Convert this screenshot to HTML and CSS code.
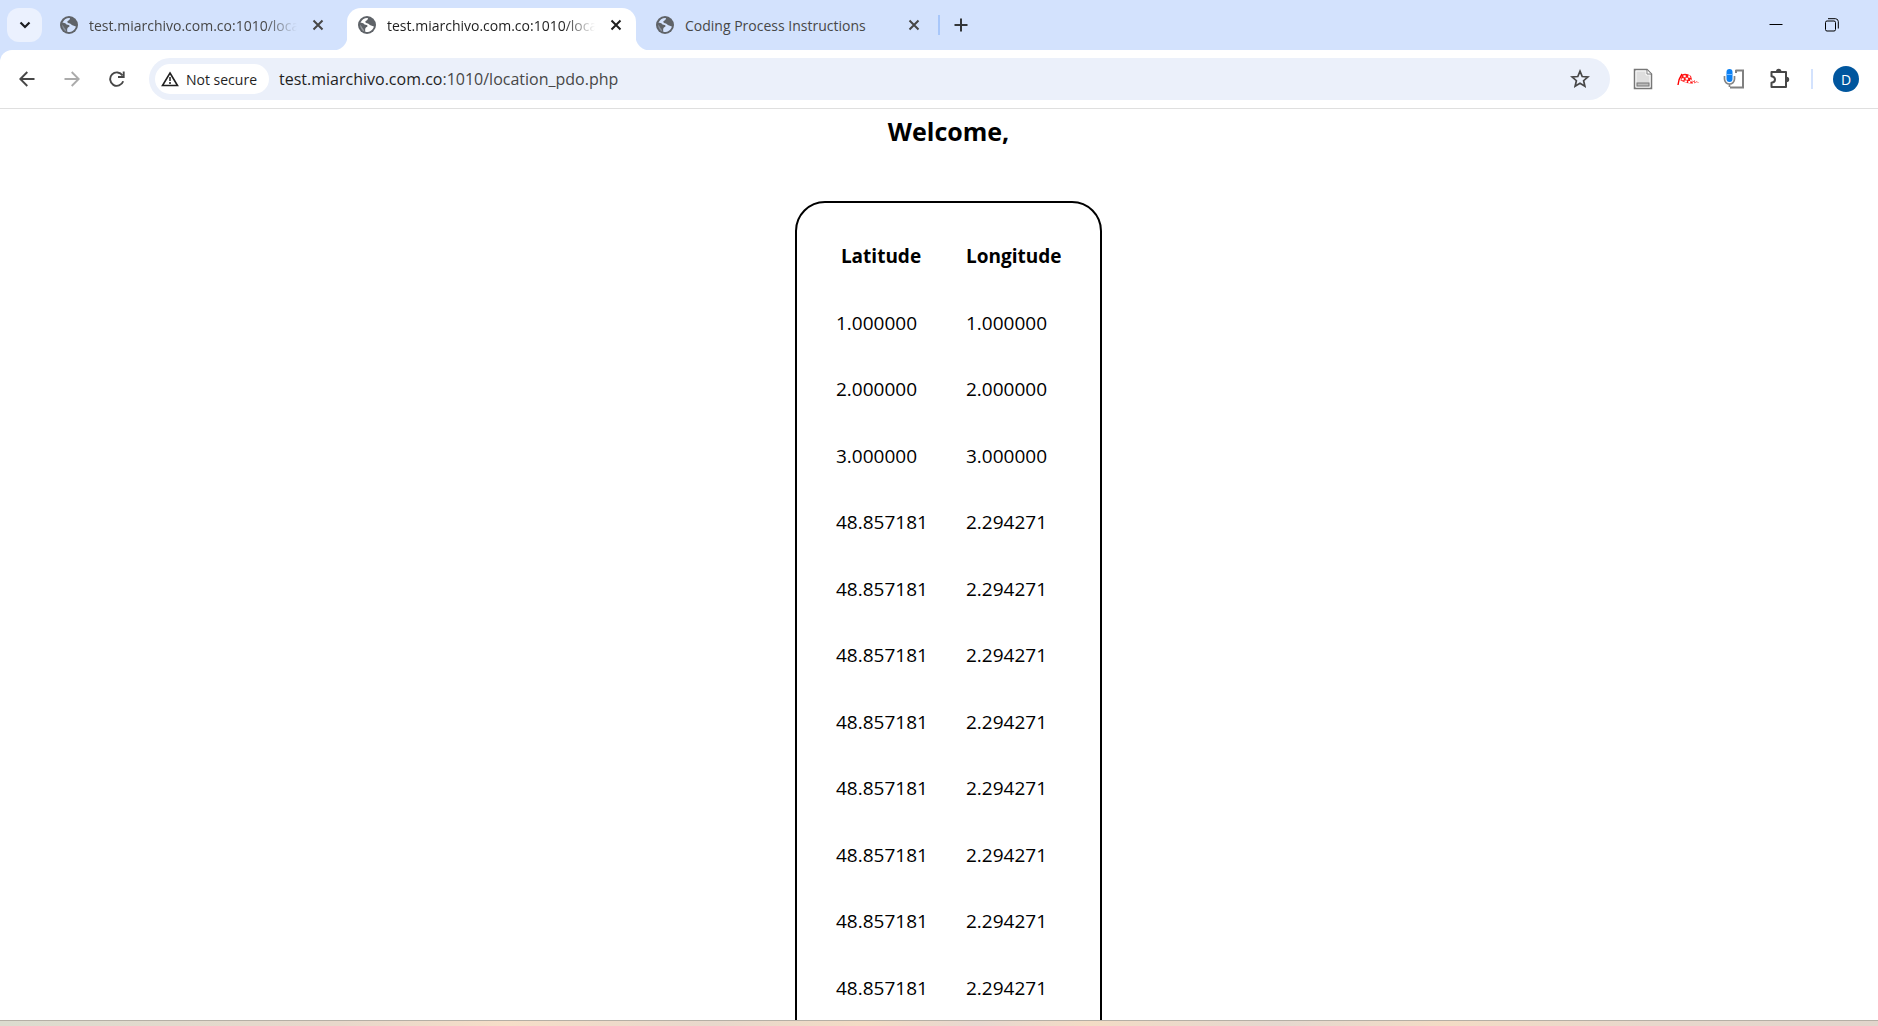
FILE: index.html
```html
<!DOCTYPE html>
<html lang="en">
<head>
<meta charset="utf-8">
<title>Location</title>
<link rel="stylesheet" href="styles.css">
</head>
<body>
<svg class="defs" aria-hidden="true">
  <symbol id="globe" viewBox="0 0 18 18">
    <circle cx="9" cy="9" r="9" fill="#5f6368"/>
    <path d="M10 2 C7 1.600 3.500 3.500 2.400 7 C4.500 6.500 5.500 7.500 6.500 8.500 C8 9 9.500 8.500 9.500 10 C9.500 11.200 8 11 7.500 12 C7 13.500 7 14.500 7.500 16 C11.500 16.500 15 14 15.900 10.500 C14 9.500 12 9.500 11 8.200 C10 7 7.500 7.500 7.300 6 C7.100 4.500 9 4.500 9.500 3.700 Z" fill="currentColor"/>
    <path d="M2.100 8.500 C2 12 4 14.800 6.500 15.800 C6 13 4.500 12 3.600 10.400 Z" fill="currentColor" opacity=".35"/>
  </symbol>
  <symbol id="close" viewBox="0 0 12 12">
    <path d="M1.500 1.500 L10.500 10.500 M10.500 1.500 L1.500 10.500" fill="none" stroke="currentColor" stroke-width="2"/>
  </symbol>
</svg>
<header class="browser">
  <div class="tabstrip">
    <button class="tab-search" aria-label="Search tabs">
      <svg width="12" height="8" viewBox="0 0 12 8"><path d="M1.500 1.500 L6 6 L10.500 1.500" fill="none" stroke="#1b1c20" stroke-width="2.200"/></svg>
    </button>
    <div class="tab">
      <svg class="favicon"><use href="#globe"/></svg>
      <span class="tab-title faded">test.miarchivo.com.co:1010/location</span>
      <button class="icon-button" aria-label="Close tab"><svg width="12" height="12"><use href="#close"/></svg></button>
    </div>
    <div class="tab active">
      <svg class="favicon"><use href="#globe"/></svg>
      <span class="tab-title faded">test.miarchivo.com.co:1010/location</span>
      <button class="icon-button" aria-label="Close tab"><svg width="12" height="12"><use href="#close"/></svg></button>
    </div>
    <div class="tab">
      <svg class="favicon"><use href="#globe"/></svg>
      <span class="tab-title">Coding Process Instructions</span>
      <button class="icon-button" aria-label="Close tab"><svg width="12" height="12"><use href="#close"/></svg></button>
    </div>
    <span class="strip-divider"></span>
    <button class="icon-button new-tab" aria-label="New tab">
      <svg width="14" height="14" viewBox="0 0 14 14"><path d="M7 0.500 V13.500 M0.500 7 H13.500" stroke="#333639" stroke-width="2"/></svg>
    </button>
    <div class="window-controls">
      <button class="window-button" aria-label="Minimize"><svg width="14" height="14" viewBox="0 0 14 14"><path d="M0.500 6.500 H13.500" stroke="#000"/></svg></button>
      <button class="window-button" aria-label="Restore"><svg width="14" height="14" viewBox="0 0 14 14"><rect x=".5" y="3" width="10" height="10" rx="1.500" fill="none" stroke="#000"/><path d="M3 .7 H10.500 A3 3 0 0 1 13.300 3.500 V10.500" fill="none" stroke="#000"/></svg></button>
    </div>
  </div>
  <div class="toolbar">
    <nav class="nav-buttons">
      <button class="icon-button" aria-label="Back"><svg width="16" height="16" viewBox="0 0 16 16"><path d="M15.500 8 H1.500 M8.300 1 L1.300 8 L8.300 15" fill="none" stroke="#474747" stroke-width="1.900"/></svg></button>
      <button class="icon-button" aria-label="Forward"><svg width="16" height="16" viewBox="0 0 16 16"><path d="M.5 8 H14.500 M7.700 1 L14.700 8 L7.700 15" fill="none" stroke="#ababab" stroke-width="1.900"/></svg></button>
      <button class="icon-button" aria-label="Reload"><svg width="16" height="16" viewBox="0 0 16 16"><path d="M14.200 10.300 A6.700 6.700 0 1 1 13.500 4.500 M14.700 .5 V6 H9" fill="none" stroke="#474747" stroke-width="1.900"/></svg></button>
    </nav>
    <div class="omnibox">
      <button class="security-chip">
        <svg width="18" height="16" viewBox="0 0 18 16"><path d="M9 2 L16.500 14.500 H1.500 Z" fill="none" stroke="#1f1f1f" stroke-width="1.600"/><path d="M9 6 V10 M9 11 V13" stroke="#1f1f1f" stroke-width="1.500"/></svg>
        Not secure
      </button>
      <div class="url" role="textbox" aria-label="Address">test.miarchivo.com.co<span class="url-path">:1010/location_pdo.php</span></div>
      <button class="icon-button" aria-label="Bookmark"><svg width="20" height="20" viewBox="0 0 20 20"><path d="M10 2.200 L12.200 7.500 L17.900 8 L13.600 11.700 L14.900 17.300 L10 14.300 L5.100 17.300 L6.400 11.700 L2.100 8 L7.800 7.500 Z" fill="none" stroke="#474747" stroke-width="1.700"/></svg></button>
    </div>
    <div class="extensions">
      <button class="icon-button" aria-label="Page extension"><svg width="20" height="22" viewBox="0 0 20 22"><path d="M1.500 1.500 H14 L18.500 6 V20.500 H1.500 Z" fill="#dedede" stroke="#777" stroke-width="1.500"/><path d="M3 3 H13 V7 H17 V19 H3 Z" fill="none" stroke="#fafafa"/><path d="M14 2 V6 H18" fill="#fff" stroke="#888"/><rect x="4" y="15" width="12" height="3" fill="#bbb" stroke="#777"/></svg></button>
      <button class="icon-button" aria-label="Flag extension"><svg width="22" height="16" viewBox="0 0 22 16"><path d="M1 14 Q1.500 8 5 3" fill="none" stroke="#f00" stroke-width="1.400"/><path d="M5 3.500 Q9 1.500 14 5 L16 12.500 Q10 13 3.500 9.500 Z" fill="#ff1616"/><path d="M6.500 4.200 h2.200 v2 h-2.200Z M11 4.500 h1.800 l.8 2.300 h-2.200Z M8.600 6.800 h2.200 l.4 2 h-2.400Z M4.800 7.200 h2 v2 h-2.400Z M13 8.500 h1.600 l.6 2 h-2Z M7.500 9.400 h2.400 v2 h-2.400Z M11.200 10 h1.800 l.4 2 h-2Z" fill="#fff"/><path d="M15 12 L17.500 9.500 L17.500 12 L20 10.500 L21.500 12" fill="none" stroke="#f66"/></svg></button>
      <button class="icon-button" aria-label="Voice extension"><svg width="22" height="22" viewBox="0 0 22 22"><path d="M12.500 2.500 H20 V19.500 H7 M13 2 V5" fill="none" stroke="#808080" stroke-width="2"/><path d="M1.500 8 V11 A5 5 0 0 0 11.500 11 V8 M6.500 16 V19" fill="none" stroke="#858585" stroke-width="1.700"/><rect x="3.500" y="1" width="6" height="13" rx="3" fill="#0b80f3"/><path d="M3.500 6.500 H9.500" stroke="#75b9ff"/></svg></button>
      <button class="icon-button" aria-label="Extensions"><svg width="22" height="22" viewBox="0 0 22 22"><path d="M2.500 4 H17 V19 H2.500 V14.800 Q6 14.300 6 11.500 Q6 8.700 2.500 8.200 Z" fill="none" stroke="#474747" stroke-width="2" stroke-linejoin="round"/><path d="M7 3.500 A2.700 2.700 0 0 1 12.400 3.500 Z M17.500 8.800 A2.700 2.700 0 0 1 17.500 14.200 Z" fill="#474747"/></svg></button>
    </div>
    <span class="toolbar-divider"></span>
    <button class="avatar" aria-label="Profile">D</button>
  </div>
</header>
<main class="page">
  <h2 class="welcome">Welcome,</h2>
  <table class="locations">
    <thead><tr><th class="lat" scope="col">Latitude</th><th scope="col">Longitude</th></tr></thead>
    <tbody>
      <tr><td>1.000000</td><td>1.000000</td></tr>
      <tr><td>2.000000</td><td>2.000000</td></tr>
      <tr><td>3.000000</td><td>3.000000</td></tr>
      <tr><td>48.857181</td><td>2.294271</td></tr>
      <tr><td>48.857181</td><td>2.294271</td></tr>
      <tr><td>48.857181</td><td>2.294271</td></tr>
      <tr><td>48.857181</td><td>2.294271</td></tr>
      <tr><td>48.857181</td><td>2.294271</td></tr>
      <tr><td>48.857181</td><td>2.294271</td></tr>
      <tr><td>48.857181</td><td>2.294271</td></tr>
      <tr><td>48.857181</td><td>2.294271</td></tr>
    </tbody>
  </table>
</main>
<footer class="desktop-edge"></footer>
</body>
</html>
```
FILE: styles.css
```css
* { box-sizing: border-box; }

body {
  margin: 0;
  height: 100vh;
  display: flex;
  flex-direction: column;
  overflow: hidden;
  background: #fff;
  color: #000;
  font-family: "Open Sans", "Noto Sans", sans-serif;
}

button {
  padding: 0;
  border: 0;
  background: none;
  color: inherit;
  font: inherit;
}

svg { display: block; }
.defs { display: none; }
.browser { flex: none; background: #d3e2fd; }

/* Tabs */
.tabstrip {
  display: flex;
  align-items: center;
  height: 50px;
  padding-left: 7px;
  color: #474747;
  font-size: 14px;
}

.tab-search {
  display: grid;
  place-items: center;
  flex: none;
  width: 35px;
  height: 34px;
  margin-right: 7px;
  border-radius: 12px;
  background: #ebf1fe;
}

.tab {
  position: relative;
  display: flex;
  align-items: center;
  align-self: flex-end;
  flex: 0 1 289px;
  min-width: 0;
  height: 42px;
  padding: 0 10px 8px 11px;
}

.tab + .tab { margin-left: 9px; }

.tab.active {
  border-radius: 14px 14px 0 0;
  background: #fff;
  color: #1f1f1f;
}

.tab.active::before,
.tab.active::after {
  content: "";
  position: absolute;
  bottom: 0;
  width: 14px;
  height: 14px;
}

.tab.active::before {
  right: 100%;
  background: radial-gradient(circle at 0 0, transparent 14px, #fff 15px);
}

.tab.active::after {
  left: 100%;
  background: radial-gradient(circle at 100% 0, transparent 14px, #fff 15px);
}

.favicon { flex: none; width: 18px; height: 18px; margin-right: 11px; color: #d3e2fd; }
.active .favicon { color: #fff; }

.tab-title {
  flex: 1;
  min-width: 0;
  margin-right: 11px;
  overflow: hidden;
  white-space: nowrap;
}

.faded {
  -webkit-mask-image: linear-gradient(to left, transparent, #000 32px);
  mask-image: linear-gradient(to left, transparent, #000 32px);
}

.icon-button {
  display: grid;
  place-items: center;
  flex: none;
  min-width: 20px;
  height: 24px;
}

.strip-divider { width: 2px; height: 20px; margin-left: 4px; background: #a8c7fa; }
.new-tab { margin-left: 11px; }
.window-controls { display: flex; margin-left: auto; padding-right: 18px; }
.window-button { display: grid; place-items: center; width: 56px; height: 48px; }

/* Address bar */
.toolbar {
  display: flex;
  align-items: center;
  height: 59px;
  padding: 0 19px 0 17px;
  border-bottom: 1px solid #dfdfdf;
  border-radius: 12px 0 0 0;
  background: #fff;
}

.nav-buttons { display: flex; gap: 25px; margin-right: 22px; }

.omnibox {
  display: flex;
  align-items: center;
  flex: 1;
  height: 42px;
  padding: 0 20px 0 6px;
  border-radius: 21px;
  background: #ebf0fa;
}

.security-chip {
  display: flex;
  align-items: center;
  gap: 7px;
  height: 30px;
  padding: 0 12px 0 6px;
  border-radius: 15px;
  background: #fff;
  color: #1f1f1f;
  font-size: 14px;
  font-weight: 500;
}

.url {
  flex: 1;
  margin-left: 10px;
  color: #1f1f1f;
  font-size: 16px;
}

.url-path { color: #474747; }
.extensions { display: flex; gap: 24px; margin-left: 23px; }
.toolbar-divider { width: 2px; height: 20px; margin: 0 20px; background: #d3e2fd; }

.avatar {
  width: 26px;
  height: 26px;
  border-radius: 50%;
  background: #00569e;
  color: #fff;
  font-size: 14px;
}

/* Page content */
.page {
  flex: 1;
  min-height: 0;
  overflow: hidden;
  padding-left: 19px;
}

.welcome {
  margin: 4px 0 52px;
  font-size: 25px;
  line-height: 36px;
  text-align: center;
}

.locations {
  table-layout: fixed;
  width: 307px;
  margin: 0 auto;
  padding: 20px 18px 60px 19px;
  border: 2px solid #000;
  border-radius: 30px;
  border-collapse: separate;
  border-spacing: 0;
  font-size: 19px;
}

.locations th,
.locations td {
  height: 66px;
  padding: 0 20px;
  line-height: 26px;
  text-align: left;
  white-space: nowrap;
}

.locations tbody tr:nth-child(odd) td { height: 67px; }
.locations .lat { width: 130px; text-align: center; }

.desktop-edge {
  flex: none;
  height: 6px;
  border-top: 1px solid #b5afa5;
  background: linear-gradient(90deg, #dcdccf, #e8d8cb 18%, #f6dec8 27%, #e8d8cc 38%, #f3dcc5 46%, #e8d8d0 52%, #f3dcc5 58%, #e5d8cf 68%, #f3dcc5 77%, #e8d8cc 88%, #e2d5cc);
}
```
